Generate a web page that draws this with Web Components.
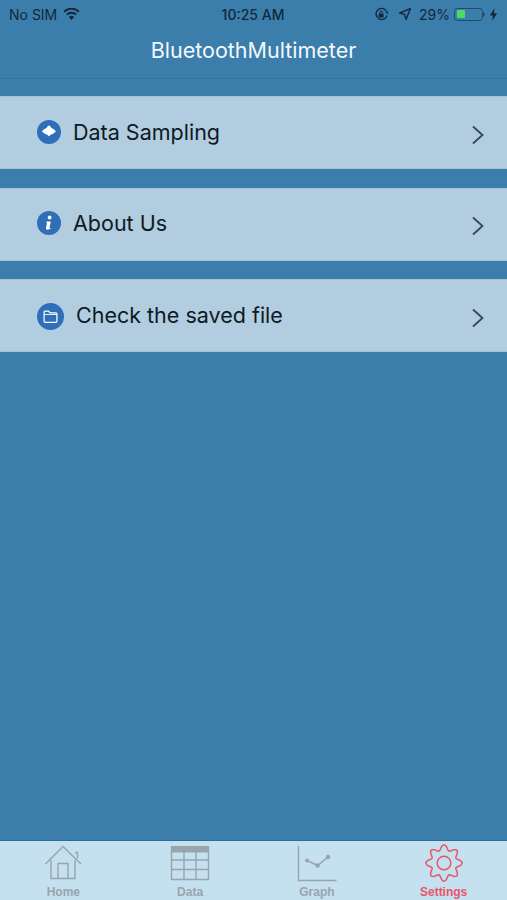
<!DOCTYPE html>
<html>
<head>
<meta charset="utf-8">
<title>BluetoothMultimeter</title>
<style>
    html, body {
        margin: 0;
        height: 100%;
        background: #3b7eab;
    }
    body {
        font-family: "Inter", "Liberation Sans", sans-serif;
    }
</style>
</head>
<body>
<app-shell>
    <status-bar slot="top"></status-bar>
    <nav-bar slot="top" title="BluetoothMultimeter"></nav-bar>
    <menu-row label="Data Sampling" icon="sampling"></menu-row>
    <menu-row label="About Us" icon="info"></menu-row>
    <menu-row label="Check the saved file" icon="folder"></menu-row>
    <tab-bar slot="bottom"></tab-bar>
</app-shell>

<script>
class AppShell extends HTMLElement {
    constructor() {
        super();
        this.attachShadow({ mode: 'open' });
    }

    connectedCallback() {
        this.shadowRoot.innerHTML = `
            <style>
                :host {
                    display: flex;
                    flex-direction: column;
                    height: 900px;
                    background: #3b7eab;
                }
                .rows {
                    flex: 1;
                    display: flex;
                    flex-direction: column;
                    gap: 18.5px;
                    padding-top: 17px;
                }
            </style>
            <slot name="top"></slot>
            <div class="rows"><slot></slot></div>
            <slot name="bottom"></slot>
        `;
    }
}

class StatusBar extends HTMLElement {
    constructor() {
        super();
        this.attachShadow({ mode: 'open' });
    }

    connectedCallback() {
        this.shadowRoot.innerHTML = `
            <style>
                :host {
                    display: grid;
                    grid-template-columns: 1fr auto 1fr;
                    align-items: center;
                    height: 28px;
                    padding: 0 10px 0 9px;
                    color: #12283a;
                    font-size: 14px;
                }
                .left, .right {
                    display: flex;
                    align-items: center;
                }
                .left { gap: 6px; }
                .right { justify-content: flex-end; }
                .time { font-weight: 500; }
                svg { display: block; }
                .batt {
                    box-sizing: border-box;
                    width: 29px;
                    height: 13px;
                    border: 1px solid #1f4a68;
                    border-radius: 3.5px;
                    padding: 1.5px;
                    margin-left: 4px;
                }
                .batt i {
                    display: block;
                    width: 8px;
                    height: 100%;
                    background: #4cd964;
                    border-radius: 1px;
                }
            </style>
            <div class="left">
                <span>No SIM</span>
                <svg width="17" height="12" viewBox="0 0 17 12">
                    <path d="M8.5 12 5.9 9a3.6 3.6 0 0 1 5.2 0z" fill="#12283a"/>
                    <path d="M3.9 6.6a6.4 6.4 0 0 1 9.2 0M1.2 3.7a10.2 10.2 0 0 1 14.6 0" fill="none" stroke="#12283a" stroke-width="2"/>
                </svg>
            </div>
            <span class="time">10:25 AM</span>
            <div class="right">
                <svg width="16" height="14" viewBox="0 0 16 14" style="margin-right:9px">
                    <path d="M13 8.6A5.6 5.6 0 1 1 12.4 4" fill="none" stroke="#12283a" stroke-width="1.4"/>
                    <path d="M11 4.4h3.4L13.4 7z" fill="#12283a"/>
                    <rect x="4.6" y="6.4" width="5" height="4" rx=".6" fill="#12283a"/>
                    <path d="M5.8 6.4V5.2a1.3 1.3 0 0 1 2.6 0v1.2" fill="none" stroke="#12283a"/>
                </svg>
                <svg width="12" height="12" viewBox="0 0 12 12" style="margin-right:8px">
                    <path d="M11.4.6 7 11.4 5.6 6.4.6 5z" fill="none" stroke="#12283a" stroke-width="1.4" stroke-linejoin="round"/>
                </svg>
                <span>29%</span>
                <div class="batt"><i></i></div>
                <svg width="2" height="5" viewBox="0 0 2 5" style="margin-right:5px"><rect width="1.4" height="4" y=".5" fill="#1f4a68"/></svg>
                <svg width="7" height="13" viewBox="0 0 7 13"><path d="M4.4 0 0 7.4h2.8L2.2 13 7 5.2H4z" fill="#12283a"/></svg>
            </div>
        `;
    }
}

class NavBar extends HTMLElement {
    constructor() {
        super();
        this.attachShadow({ mode: 'open' });
    }

    connectedCallback() {
        this.shadowRoot.innerHTML = `
            <style>
                :host {
                    display: flex;
                    align-items: center;
                    justify-content: center;
                    height: 51px;
                    box-sizing: border-box;
                    padding-bottom: 6px;
                    border-bottom: 1px solid #37749d;
                    color: #f2f8fc;
                    font-size: 21.5px;
                }
            </style>
            <span>${this.getAttribute('title')}</span>
        `;
    }
}

class MenuRow extends HTMLElement {
    constructor() {
        super();
        this.attachShadow({ mode: 'open' });
    }

    get icons() {
        return {
            sampling: `<path d="M12 5.6c1 0 1.6 1.4 2.4 2.4 1.2.4 3.6 1.6 4.4 3.6.2.5-.5.8-1.4 1-1.2 1.8-2.4 1.5-3.4 2-.9.6-1.4 1.6-2 1.6s-1.2-1-2-1.600c-1-.5-2.400-.2-3.600-2-.9-.2-1.500-.5-1.300-1 .8-2 3.200-3.200 4.400-3.600.8-1 1.500-2.400 2.500-2.400z" fill="#fff"/>`,
            info: `<circle cx="12.600" cy="6.500" r="1.900" fill="#fff"/><path d="M9.600 10.400h4.300l-1.500 6.200c-.1.500.3.600 1.500.1l-.2.900c-1 .7-2.200 1.100-3.200 1.100-1.300 0-1.800-.8-1.500-2l1-4.300c.1-.6 0-.9-1-1z" fill="#fff"/>`,
            folder: `<path d="M6.300 8.300c0-.6.400-1 1-1h3l1.400 1.500h5c.6 0 1 .4 1 1v6.400c0 .6-.4 1-1 1H7.300c-.6 0-1-.4-1-1z" fill="none" stroke="#fff" stroke-width="1.100"/><path d="M6.300 10.200h11.400" stroke="#fff" stroke-width=".8"/>`
        };
    }

    connectedCallback() {
        const icon = this.getAttribute('icon');
        const large = icon === 'folder';
        this.shadowRoot.innerHTML = `
            <style>
                :host {
                    display: flex;
                    align-items: center;
                    height: 73px;
                    box-sizing: border-box;
                    padding: 0 22px 0 37px;
                    background: #b1cddf;
                    border-top: 1px solid #a3c3d9;
                    border-bottom: 1px solid #a3c3d9;
                    color: #0e1a24;
                    font-size: 21.5px;
                }
                svg.badge {
                    width: ${large ? 27 : 24}px;
                    height: ${large ? 27 : 24}px;
                    margin-right: ${large ? 12 : 12}px;
                    flex: none;
                    position: relative;
                    top: ${large ? 1 : -1}px;
                }
                span {
                    flex: 1;
                    position: relative;
                    top: -1px;
                }
                svg.chev { width: 14px; height: 20px; flex: none; position: relative; top: 2px; }
            </style>
            <svg class="badge" viewBox="0 0 24 24">
                <circle cx="12" cy="12" r="12" fill="#2f6fb8"/>
                ${this.icons[icon]}
            </svg>
            <span>${this.getAttribute('label')}</span>
            <svg class="chev" viewBox="0 0 14 20">
                <path d="M2 1.500 11.500 10 2 18.500" fill="none" stroke="#33475a" stroke-width="1.800"/>
            </svg>
        `;
    }
}

class TabBar extends HTMLElement {
    constructor() {
        super();
        this.attachShadow({ mode: 'open' });
    }

    gearPath() {
        // 8 lobes round a centre, built as one closed curve
        let d = '';
        for (let i = 0; i <= 160; i++) {
            const a = i / 160 * Math.PI * 2;
            const r = 15.5 + 2.6 * Math.cos(a * 8);
            const x = (20 + r * Math.sin(a)).toFixed(2);
            const y = (20 - r * Math.cos(a)).toFixed(2);
            d += (i ? 'L' : 'M') + x + ' ' + y;
        }
        return d + 'z';
    }

    connectedCallback() {
        const grey = '#98a5ae';
        const red = '#e8556a';
        this.shadowRoot.innerHTML = `
            <style>
                :host {
                    display: grid;
                    grid-template-columns: repeat(4, 1fr);
                    height: 60px;
                    box-sizing: border-box;
                    background: #c5e0ef;
                    border-top: 1px solid #2f6c96;
                    font-family: "Liberation Sans", sans-serif;
                    font-size: 12px;
                    font-weight: 700;
                    color: ${grey};
                }
                .tab {
                    display: flex;
                    flex-direction: column;
                    align-items: center;
                    padding-top: 2px;
                }
                .tab svg { display: block; width: 40px; height: 40px; }
                .tab span { margin-top: 2px; line-height: 14px; }
                .on { color: ${red}; }
            </style>
            <div class="tab">
                <svg viewBox="0 0 40 40" fill="none" stroke="${grey}" stroke-width="1.400">
                    <path d="M2.500 21 20 3.500 38 21M8 17v18.500h24V17M15 35.500v-15h10v15M32 9.500h2.500v6"/>
                </svg>
                <span>Home</span>
            </div>
            <div class="tab">
                <svg viewBox="0 0 40 40" fill="none" stroke="${grey}" stroke-width="1.400">
                    <rect x="1" y="3" width="38" height="6.500" fill="${grey}" stroke="none"/>
                    <path d="M1.500 3v33.500h37V3M1.500 17h37M1.500 26.500h37M14 9v27.500M26 9v27.500"/>
                </svg>
                <span>Data</span>
            </div>
            <div class="tab">
                <svg viewBox="0 0 40 40" fill="none" stroke="${grey}" stroke-width="1.400">
                    <path d="M1.500 3v34.500h38"/>
                    <path d="M10 17.500l10.500 5 10.500-8.500" stroke-width="1.600"/>
                    <circle cx="10" cy="17.500" r="2" fill="${grey}" stroke="none"/>
                    <circle cx="20.500" cy="22.500" r="2.200" fill="${grey}" stroke="none"/>
                    <circle cx="31" cy="14" r="2.200" fill="${grey}" stroke="none"/>
                </svg>
                <span>Graph</span>
            </div>
            <div class="tab on">
                <svg viewBox="0 0 40 40" fill="none" stroke="${red}" stroke-width="1.500">
                    <path d="${this.gearPath()}" stroke-linejoin="round"/>
                    <circle cx="20" cy="20" r="6.800"/>
                </svg>
                <span>Settings</span>
            </div>
        `;
    }
}

customElements.define('app-shell', AppShell);
customElements.define('status-bar', StatusBar);
customElements.define('nav-bar', NavBar);
customElements.define('menu-row', MenuRow);
customElements.define('tab-bar', TabBar);
</script>
</body>
</html>
